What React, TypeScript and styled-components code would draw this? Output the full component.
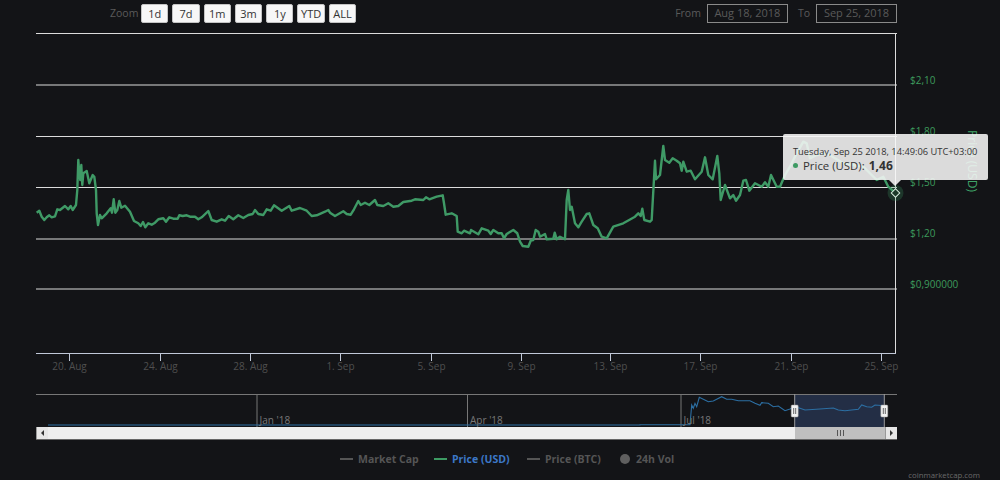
import React from 'react';
import styled, { createGlobalStyle } from 'styled-components';

const GlobalStyle = createGlobalStyle`
  html, body {
    margin: 0;
    padding: 0;
    background: #131417;
  }
`;

const FONT = "'Open Sans', 'Liberation Sans', Arial, sans-serif";

// traced from the price series, x / y in page pixels
const z4 = [[110,218],[118,212],[125,230],[133,240],[140,232],[148,226],[155,232],[165,229],[172,208],[180,210],[195,198],[205,208],[212,198],[218,210],[228,195],[232,150],[235,60],[238,100],[241,120],[244,75],[247,135],[250,100],[260,93],[268,130],[278,105],[283,110],[288,150],[290,220],[294,255],[300,225],[305,235],[320,220],[332,205],[336,218],[341,178],[346,218],[352,210],[358,183],[364,203],[375,197],[390,215],[402,243],[415,250],[422,258],[429,246],[436,262],[445,250],[455,254],[465,248],[475,238],[490,235],[498,245],[508,232],[520,236],[533,236],[538,226],[548,228],[560,226],[570,230],[585,230],[595,238],[605,232],[625,213],[635,240],[650,245],[665,238],[675,242],[686,228],[700,238],[715,226],[730,234],[745,225],[758,222],[765,210],[775,222],[790,225],[800,208],[812,212],[822,196],[845,212],[868,198],[875,212],[900,204],[920,212],[935,228],[950,226],[975,215],[985,210]];
const z5 = [[0,218],[15,228],[40,214],[50,222],[62,224],[72,208],[85,183],[92,195],[105,188],[118,195],[135,180],[142,195],[160,198],[175,190],[190,200],[205,198],[220,186],[245,182],[255,178],[280,180],[288,172],[298,178],[320,170],[338,166],[342,190],[347,224],[365,220],[380,228],[383,275],[395,280],[402,272],[420,280],[423,270],[445,283],[455,265],[475,272],[482,282],[490,270],[505,280],[515,280],[522,295],[530,282],[550,270],[562,280],[570,305],[578,318],[595,320],[602,302],[610,300],[617,270],[625,275],[630,290],[645,282],[650,298],[670,296],[674,278],[680,298],[690,290],[705,298],[710,180],[715,150],[720,210],[725,200],[735,250],[745,262],[755,245],[770,222],[778,220],[790,255],[803,265],[815,290],[830,295],[850,260],[880,250],[915,230],[925,220],[932,228],[937,206],[943,240],[960,245],[965,240],[975,62],[978,118],[990,105]];
const z6 = [[100,48],[105,90],[118,98],[128,85],[140,92],[150,100],[155,122],[160,95],[170,125],[182,122],[195,148],[215,125],[225,82],[235,135],[248,148],[262,78],[268,130],[272,210],[285,165],[300,205],[310,195],[318,212],[330,195],[340,152],[348,150],[358,182],[375,160],[395,170],[405,157],[415,170],[423,135],[440,170],[450,170],[465,135],[480,110],[500,70],[520,35],[530,40],[540,85],[560,75],[590,70],[640,100],[700,110],[740,150],[760,140],[775,170],[795,188]];

const pricePoints = [
  ...z4.map(([x, y]) => [x / 3, 140 + y / 3]),
  ...z5.map(([x, y]) => [330 + x / 3, 140 + y / 3]),
  ...z6.map(([x, y]) => [630 + x / 3, 130 + y / 3]),
]
  .map(([x, y]) => `${x.toFixed(1)},${y.toFixed(1)}`)
  .join(' ');

const navPoints = [[0,254],[150,254],[155,195],[160,205],[165,190],[170,200],[178,172],[190,178],[205,185],[220,183],[245,170],[260,178],[275,178],[295,182],[330,182],[345,190],[360,196],[365,188],[385,190],[400,200],[415,198],[435,212],[450,207],[464,200],[480,205],[495,210],[540,207],[580,204],[595,210],[615,212],[635,210],[655,208],[665,195],[680,200],[695,202],[705,195],[733,197]]
  .map(([x, y]) => `${(640 + x / 3).toFixed(1)},${(340 + y / 3 - 394).toFixed(1)}`)
  .join(' ');

// whole-pixel lines straddle two rows, which is how the greyer rules look in the chart
const gridLines = [33.5, 85, 136.5, 187.5, 239, 289];
const priceLabels = [
  { y: 83.5, text: '$2,10' },
  { y: 134.5, text: '$1,80' },
  { y: 185.5, text: '$1,50' },
  { y: 236.5, text: '$1,20' },
  { y: 287.5, text: '$0,900000' },
];
const dateTicks = [
  { x: 69.5, text: '20. Aug' },
  { x: 160.5, text: '24. Aug' },
  { x: 250.5, text: '28. Aug' },
  { x: 340.5, text: '1. Sep' },
  { x: 431.5, text: '5. Sep' },
  { x: 521.5, text: '9. Sep' },
  { x: 610.5, text: '13. Sep' },
  { x: 700.5, text: '17. Sep' },
  { x: 791.5, text: '21. Sep' },
  { x: 881.5, text: '25. Sep' },
];
const navTicks = [
  { x: 257, text: "Jan '18" },
  { x: 467.5, text: "Apr '18" },
  { x: 681, text: "Jul '18" },
];
const ranges = ['1d', '7d', '1m', '3m', '1y', 'YTD', 'ALL'];

const Page = styled.div`
  position: relative;
  width: 1000px;
  height: 480px;
  overflow: hidden;
  background: #131417;
  font-family: ${FONT};
`;

const Toolbar = styled.div`
  display: flex;
  align-items: center;
  justify-content: space-between;
  height: 26px;
  padding: 0 103px 0 110px;
`;

const ToolGroup = styled.div`
  display: flex;
  align-items: center;
`;

const ToolLabel = styled.span`
  width: 31px;
  color: #5b5b5b;
  font-size: 10.5px;
`;

const RangeButton = styled.button`
  box-sizing: border-box;
  width: 27.3px;
  height: 19px;
  margin-right: 4px;
  padding: 0;
  border: 1px solid #c4c4c4;
  border-radius: 2px;
  background: #f7f7f7;
  color: #333;
  font: 11px ${FONT};
`;

const DateBox = styled.div`
  box-sizing: border-box;
  width: 81px;
  height: 19px;
  margin-left: 6px;
  border: 1px solid #8a8a8a;
  color: #5a5a5a;
  font-size: 11px;
  line-height: 16px;
  text-align: center;
`;

const DateLabel = styled(ToolLabel)<{ $gap?: number }>`
  width: auto;
  margin-left: ${(p) => p.$gap ?? 0}px;
`;

const ChartFrame = styled.div`
  position: relative;
  height: 368px;
`;

const PlotSvg = styled.svg`
  display: block;
`;

const Tooltip = styled.div`
  position: absolute;
  left: 783px;
  top: 108px;
  box-sizing: border-box;
  width: 205px;
  height: 46px;
  padding: 11px 10px 0;
  border-radius: 2px;
  background: rgba(247, 247, 247, 0.88);
  color: #333;
  font-size: 9.3px;
  line-height: 13px;
  white-space: nowrap;

  &::after {
    content: '';
    position: absolute;
    left: 106px;
    bottom: -6px;
    border-left: 6px solid transparent;
    border-right: 6px solid transparent;
    border-top: 6px solid rgba(247, 247, 247, 0.88);
  }
`;

const TooltipRow = styled.div`
  display: flex;
  align-items: center;
  margin-top: 1px;
  font-size: 11.4px;
`;

const TooltipDot = styled.span`
  width: 5px;
  height: 5px;
  margin-right: 5px;
  border-radius: 50%;
  background: #3d9b63;
`;

const TooltipValue = styled.b`
  margin-left: 4px;
  font-size: 12px;
`;

const AxisTitle = styled.div`
  position: absolute;
  left: 971.5px;
  top: 135px;
  color: #3fa468;
  font-size: 12px;
  white-space: nowrap;
  transform: translate(-50%, -50%) rotate(90deg);
`;

const Scrollbar = styled.div`
  display: flex;
  box-sizing: border-box;
  width: 861px;
  height: 13px;
  margin-left: 36px;
  border-bottom: 1px solid #666;
  background: #eeeeee;
`;

const ScrollButton = styled.div`
  display: flex;
  align-items: center;
  justify-content: center;
  width: 12px;
  background: #e6e6e6;
  border-left: 1px solid #999;
  box-sizing: border-box;
`;

const ScrollArrow = styled.span<{ $dir: 'left' | 'right' }>`
  border-top: 3px solid transparent;
  border-bottom: 3px solid transparent;
  ${(p) => (p.$dir === 'left' ? 'border-right: 3px solid #333;' : 'border-left: 3px solid #333;')}
`;

const ScrollTrack = styled.div`
  flex: 1;
  display: flex;
  justify-content: flex-end;
`;

const ScrollThumb = styled.div`
  display: flex;
  align-items: center;
  justify-content: center;
  gap: 2px;
  width: 90px;
  background: #bfbfbf;
`;

const Grip = styled.span`
  width: 1px;
  height: 6px;
  background: #555;
`;

const Legend = styled.div`
  display: flex;
  align-items: center;
  height: 38px;
  padding-left: 340px;
`;

const LegendItem = styled.div<{ $active?: boolean; $width: number }>`
  display: flex;
  align-items: center;
  width: ${(p) => p.$width}px;
  color: ${(p) => (p.$active ? '#3c78c8' : '#555')};
  font-size: 10.5px;
  font-weight: bold;
  white-space: nowrap;
`;

const LegendLine = styled.span<{ $color: string }>`
  width: 13px;
  height: 1.5px;
  margin-right: 5px;
  background: ${(p) => p.$color};
`;

const LegendDot = styled.span`
  width: 10px;
  height: 10px;
  margin-right: 6px;
  border-radius: 50%;
  background: #5f5f5f;
`;

const Credit = styled.div`
  position: absolute;
  right: 20px;
  bottom: 0;
  color: #6a6a6a;
  font-size: 7.8px;
`;

function PriceChart() {
  return (
    <PlotSvg width={1000} height={368} viewBox="0 26 1000 368">
      {gridLines.map((y) => (
        <line key={y} x1={36} x2={897} y1={y} y2={y} stroke="#dcdcdc" strokeWidth={1} />
      ))}
      <line x1={36} x2={896} y1={353.5} y2={353.5} stroke="#c0c8d8" strokeWidth={1} />
      {dateTicks.map((t) => (
        <g key={t.x}>
          <line x1={t.x} x2={t.x} y1={353} y2={361} stroke="#c0c8d8" strokeWidth={1} />
          <text x={t.x} y={370} textAnchor="middle" fill="#4f4f4f" fontSize={10} fontFamily={FONT}>
            {t.text}
          </text>
        </g>
      ))}
      <line x1={895.5} x2={895.5} y1={33} y2={353} stroke="#dcdcdc" strokeWidth={1} />
      {priceLabels.map((l) => (
        <text key={l.y} x={910} y={l.y} fill="#3d9b5c" fontSize={10} fontFamily={FONT}>
          {l.text}
        </text>
      ))}
      <polyline points={pricePoints} fill="none" stroke="#3f9a66" strokeWidth={2.4} strokeLinejoin="round" />
      <circle cx={895.5} cy={193} r={8} fill="#3d9b63" fillOpacity={0.25} />
      <rect x={892.5} y={190} width={6} height={6} fill="#1d3a2a" stroke="#d8efe0" strokeWidth={1} transform="rotate(45 895.5 193)" />
    </PlotSvg>
  );
}

function Navigator() {
  return (
    <PlotSvg width={1000} height={33} viewBox="0 0 1000 33">
      <rect x={794.7} y={0} width={89.6} height={33} fill="#232e45" />
      <line x1={36} x2={897} y1={0.5} y2={0.5} stroke="#777" strokeWidth={1} />
      {navTicks.map((t) => (
        <line key={t.x} x1={t.x} x2={t.x} y1={0} y2={33} stroke="#777" strokeWidth={1} />
      ))}
      <polyline points={`48,31 640,31 ${navPoints}`} fill="none" stroke="#2c6fa3" strokeWidth={1.1} />
      {navTicks.map((t) => (
        <text key={t.x} x={t.x + 2.5} y={30} fill="#777" fontSize={10} fontFamily={FONT}>
          {t.text}
        </text>
      ))}
      {[794.7, 884.3].map((x) => (
        <g key={x}>
          <line x1={x} x2={x} y1={0} y2={33} stroke="#9a9a9a" strokeWidth={1} />
          <rect x={x - 3.5} y={11} width={7} height={12} rx={1} fill="#f2f2f2" stroke="#999" strokeWidth={0.5} />
          <line x1={x - 1} x2={x - 1} y1={14} y2={20} stroke="#666" strokeWidth={1} />
          <line x1={x + 1} x2={x + 1} y1={14} y2={20} stroke="#666" strokeWidth={1} />
        </g>
      ))}
    </PlotSvg>
  );
}

export default function App() {
  return (
    <Page>
      <GlobalStyle />
      <Toolbar>
        <ToolGroup>
          <ToolLabel>Zoom</ToolLabel>
          {ranges.map((r) => (
            <RangeButton key={r}>{r}</RangeButton>
          ))}
        </ToolGroup>
        <ToolGroup>
          <DateLabel>From</DateLabel>
          <DateBox>Aug 18, 2018</DateBox>
          <DateLabel $gap={10}>To</DateLabel>
          <DateBox>Sep 25, 2018</DateBox>
        </ToolGroup>
      </Toolbar>
      <ChartFrame>
        <PriceChart />
        <AxisTitle>Price (USD)</AxisTitle>
        <Tooltip>
          Tuesday, Sep 25 2018, 14:49:06 UTC+03:00
          <TooltipRow>
            <TooltipDot />
            Price (USD):
            <TooltipValue>1,46</TooltipValue>
          </TooltipRow>
        </Tooltip>
      </ChartFrame>
      <Navigator />
      <Scrollbar>
        <ScrollButton>
          <ScrollArrow $dir="left" />
        </ScrollButton>
        <ScrollTrack>
          <ScrollThumb>
            <Grip />
            <Grip />
            <Grip />
          </ScrollThumb>
        </ScrollTrack>
        <ScrollButton>
          <ScrollArrow $dir="right" />
        </ScrollButton>
      </Scrollbar>
      <Legend>
        <LegendItem $width={94}>
          <LegendLine $color="#555" />
          Market Cap
        </LegendItem>
        <LegendItem $width={93} $active>
          <LegendLine $color="#3d9b63" />
          Price (USD)
        </LegendItem>
        <LegendItem $width={93}>
          <LegendLine $color="#555" />
          Price (BTC)
        </LegendItem>
        <LegendItem $width={60}>
          <LegendDot />
          24h Vol
        </LegendItem>
      </Legend>
      <Credit>coinmarketcap.com</Credit>
    </Page>
  );
}
